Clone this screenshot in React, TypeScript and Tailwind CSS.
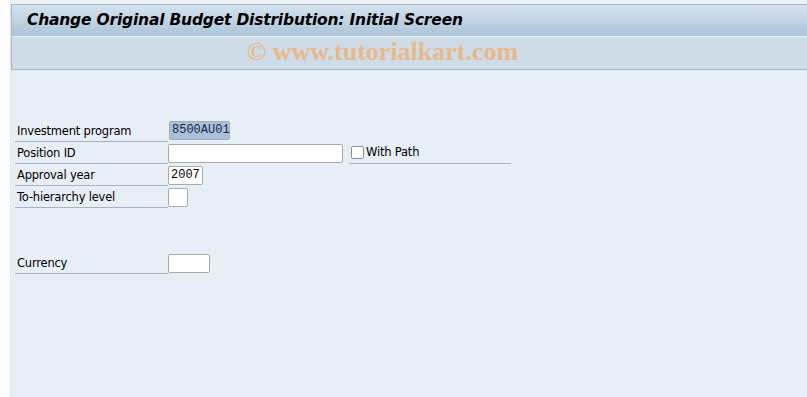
import React from "react";

const labelFont = { fontFamily: "Tahoma, 'DejaVu Sans', sans-serif" };

function Row({ label, children }: { label: string; children?: React.ReactNode }) {
  return (
    <div className="flex items-center h-[22px]">
      <div className="w-[153px] h-[22px] flex items-end border-b border-[#a9b3bd] pl-[2px] pb-[1px] text-[11.5px] text-black font-['DejaVu_Sans',sans-serif] tracking-[-0.2px]">
        {label}
      </div>
      <div className="flex items-center">{children}</div>
    </div>
  );
}

function Field({ w, value, selected }: { w: string; value?: string; selected?: boolean }) {
  return (
    <div
      className={`${w} h-[19px] border border-[#a7a9ab] rounded-[2px] flex items-center px-[2px] text-[12px] font-['Liberation_Mono',monospace] ${
        selected ? "bg-[#a9c1dc] text-[#1c2a44]" : "bg-white text-black"
      }`}
    >
      {value}
    </div>
  );
}

export default function App() {
  return (
    <div className="w-[807px] h-[397px] bg-white flex overflow-hidden" style={labelFont}>
      <div className="w-[10px] shrink-0 bg-[#fbfbfb]" />
      <div className="flex-1 flex flex-col bg-[#e8eef6] border-l border-[#dfe6ee]">
        <div className="h-[4px] bg-[#eef2f7]" />
        {/* title bar */}
        <div className="border-t border-l border-b border-[#a5b5c6]">
          <div className="h-[31px] bg-gradient-to-b from-[#d5e2ee] to-[#adc4da] flex items-center pl-[15px]">
            <h1 className="text-[15.5px] font-bold italic text-black font-['DejaVu_Sans',sans-serif] tracking-[-0.2px]">
              Change Original Budget Distribution: Initial Screen
            </h1>
          </div>
          <div className="h-[33px] bg-[#cedce7] border-t border-[#e6eef6] flex items-center justify-center pr-[54px] pb-[3px]">
            <span className="text-[26px] font-bold text-[#eab98b] font-['Liberation_Serif',serif]">
              © www.tutorialkart.com
            </span>
          </div>
        </div>

        {/* form */}
        <div className="pl-[4px] pt-[50px]">
          <Row label="Investment program">
            <div className="mt-[-2px] ml-[1px]">
              <Field w="w-[61px]" value="8500AU01" selected />
            </div>
          </Row>
          <Row label="Position ID">
            <Field w="w-[175px]" />
            <div className="ml-[6px] h-[22px] w-[162px] flex items-center border-b border-[#a9b3bd] pl-[2px]">
              <div className="w-[13px] h-[13px] bg-white border border-[#8e9196] rounded-[2px]" />
              <span className="ml-[2px] text-[11.5px] tracking-[-0.2px] font-['DejaVu_Sans',sans-serif]">With Path</span>
            </div>
          </Row>
          <Row label="Approval year">
            <Field w="w-[35px]" value="2007" />
          </Row>
          <Row label="To-hierarchy level">
            <Field w="w-[20px]" />
          </Row>
          <div className="h-[44px]" />
          <Row label="Currency">
            <Field w="w-[42px]" />
          </Row>
        </div>
      </div>
    </div>
  );
}
